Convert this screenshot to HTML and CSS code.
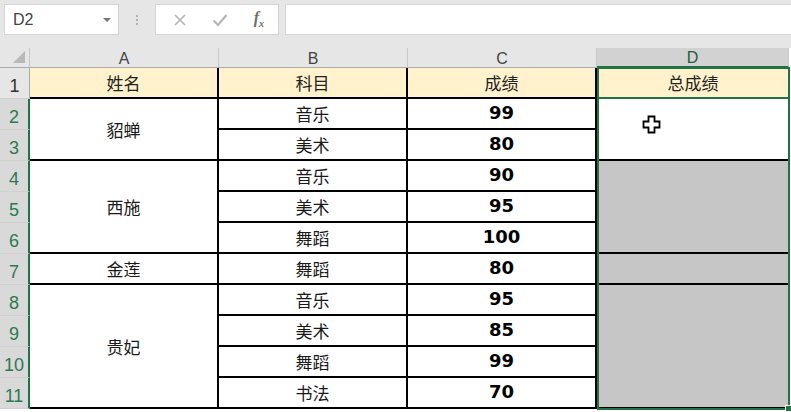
FILE: index.html
```html
<!DOCTYPE html>
<html lang="zh">
<head>
  <meta charset="UTF-8">
  <title>成绩表</title>
  <link rel="stylesheet" href="styles.css">
</head>
<body>
  <div class="top">
    <div class="name-box">
      <span>D2</span>
      <span class="caret"></span>
    </div>
    <div class="sep">
      <i></i><i></i><i></i>
    </div>
    <div class="fx-buttons">
      <svg class="fx-icon" width="14" height="14" viewBox="0 0 14 14"><path d="M2 2 L12 12 M12 2 L2 12" stroke="#b4b4b4" stroke-width="1.6" fill="none"/></svg>
      <svg class="fx-icon" width="16" height="14" viewBox="0 0 16 14"><path d="M1.5 7.5 L6 12 L14.5 2" stroke="#b4b4b4" stroke-width="2" fill="none"/></svg>
      <span class="fx">f<sub>x</sub></span>
    </div>
    <div class="formula-input"></div>
  </div>

  <div class="sheet">
    <div class="corner"><svg width="12" height="12" viewBox="0 0 12 12"><path d="M12 0 L12 12 L0 12 Z" fill="#b8b8b8"/></svg></div>
    <div class="ch">A</div>
    <div class="ch">B</div>
    <div class="ch">C</div>
    <div class="ch ch-sel">D</div>

    <div class="rh">1</div>
    <div class="cell head">姓名</div>
    <div class="cell head">科目</div>
    <div class="cell head">成绩</div>
    <div class="cell head head-d">总成绩</div>

    <div class="rh rh-sel">2</div>
    <div class="cell span2">貂蝉</div>
    <div class="cell">音乐</div>
    <div class="cell num">99</div>
    <div class="cell span2 col-d active"></div>

    <div class="rh rh-sel">3</div>
    <div class="cell">美术</div>
    <div class="cell num">80</div>

    <div class="rh rh-sel">4</div>
    <div class="cell span3">西施</div>
    <div class="cell">音乐</div>
    <div class="cell num">90</div>
    <div class="cell span3 col-d"></div>

    <div class="rh rh-sel">5</div>
    <div class="cell">美术</div>
    <div class="cell num">95</div>

    <div class="rh rh-sel">6</div>
    <div class="cell">舞蹈</div>
    <div class="cell num">100</div>

    <div class="rh rh-sel">7</div>
    <div class="cell">金莲</div>
    <div class="cell">舞蹈</div>
    <div class="cell num">80</div>
    <div class="cell col-d"></div>

    <div class="rh rh-sel">8</div>
    <div class="cell span4">贵妃</div>
    <div class="cell">音乐</div>
    <div class="cell num">95</div>
    <div class="cell span4 col-d"></div>

    <div class="rh rh-sel">9</div>
    <div class="cell">美术</div>
    <div class="cell num">85</div>

    <div class="rh rh-sel">10</div>
    <div class="cell">舞蹈</div>
    <div class="cell num">99</div>

    <div class="rh rh-sel">11</div>
    <div class="cell">书法</div>
    <div class="cell num">70</div>

    <!-- selection frame over column D -->
    <div class="selection"><span class="handle"></span></div>
    <svg class="cursor" width="19" height="19" viewBox="0 0 19 19">
      <path d="M6.5 1.5 H12.5 V6.5 H17.5 V12.5 H12.5 V17.5 H6.5 V12.5 H1.5 V6.5 H6.5 Z" fill="#fff" stroke="#000" stroke-width="1.8"/>
    </svg>
  </div>
</body>
</html>
```

FILE: styles.css
```css
body {
  margin: 0;
  width: 791px;
  height: 412px;
  overflow: hidden;
  background: #fff;
  font-family: "Liberation Sans", "Noto Sans CJK SC", sans-serif;
  color: #000;
}
.top {
  display: flex;
  align-items: flex-start;
  height: 48px;
  padding: 4px 0 0 4px;
  box-sizing: border-box;
  background: #e6e6e6;
}
.name-box {
  width: 115px;
  height: 31px;
  box-sizing: border-box;
  background: #fff;
  border: 1px solid #d6d6d6;
  display: flex;
  align-items: center;
  justify-content: space-between;
  padding: 0 7px 0 8px;
  font-size: 16px;
  color: #444;
}
.caret {
  width: 0;
  height: 0;
  border-left: 4px solid transparent;
  border-right: 4px solid transparent;
  border-top: 4px solid #777;
}
.sep {
  width: 36px;
  height: 31px;
  display: flex;
  flex-direction: column;
  align-items: center;
  justify-content: center;
  gap: 2px;
}
.sep i {
  width: 2px;
  height: 2px;
  background: #b0b0b0;
}
.fx-buttons {
  width: 124px;
  height: 31px;
  box-sizing: border-box;
  background: #fff;
  border: 1px solid #d6d6d6;
  display: flex;
  align-items: center;
  justify-content: space-between;
  padding: 0 14px 0 17px;
}
.fx {
  font-family: "Liberation Serif", serif;
  font-style: italic;
  font-weight: bold;
  font-size: 16px;
  color: #6e6e6e;
}
.fx sub {
  font-size: 10px;
}
.formula-input {
  flex: 1;
  height: 31px;
  margin-left: 6px;
  box-sizing: border-box;
  background: #fff;
  border: 1px solid #d6d6d6;
  border-right: none;
}
.sheet {
  position: relative;
  display: grid;
  grid-template-columns: 30px 189px 189px 189px 192px;
  grid-template-rows: 20px repeat(11, 31px);
}
.corner {
  background: #e6e6e6;
  border-right: 1px solid #c8c8c8;
  border-bottom: 1px solid #ababab;
  box-sizing: border-box;
  display: flex;
  align-items: flex-end;
  justify-content: flex-end;
  padding: 0 4px 4px 0;
}
.ch {
  background: #e6e6e6;
  border-right: 1px solid #c8c8c8;
  border-bottom: 1px solid #ababab;
  box-sizing: border-box;
  display: flex;
  align-items: center;
  justify-content: center;
  font-size: 16px;
  color: #444;
  padding-top: 2px;
}
.ch-sel {
  background: #d2d2d2;
  color: #215e3f;
  border-bottom: 2px solid #217346;
}
.rh {
  grid-column: 1;
  background: #e6e6e6;
  border-right: 1px solid #ababab;
  border-bottom: 1px solid #d0d0d0;
  box-sizing: border-box;
  display: flex;
  align-items: flex-end;
  justify-content: center;
  padding-bottom: 1px;
  font-size: 18px;
  color: #333;
}
.rh-sel {
  background: #d9d9d9;
  color: #2a7a52;
  border-right: 2px solid #217346;
}
.cell {
  box-sizing: border-box;
  border-right: 2px solid #000;
  border-bottom: 2px solid #000;
  background: #fff;
  display: flex;
  align-items: center;
  justify-content: center;
  font-family: "Noto Sans CJK SC", sans-serif;
  font-size: 17px;
  color: #1a1a1a;
}
.head {
  background: #fff2cc;
  color: #222;
}
.head-d {
  border-right: none;
  border-bottom: 2px solid #217346;
}
.num {
  font-family: "DejaVu Sans", sans-serif;
  font-weight: bold;
  font-size: 18px;
  color: #000;
  padding-bottom: 2px;
}
.span2 {
  grid-row: span 2;
}
.span3 {
  grid-row: span 3;
}
.span4 {
  grid-row: span 4;
}
.col-d {
  background: #c6c6c6;
  border-right: none;
}
.active {
  background: #fff;
}
.selection {
  position: absolute;
  left: 597px;
  top: 19px;
  width: 193px;
  height: 343px;
  box-sizing: border-box;
  border: 2px solid #217346;
  pointer-events: none;
}
.handle {
  position: absolute;
  right: -4px;
  bottom: -4px;
  width: 5px;
  height: 5px;
  background: #217346;
  border: 1px solid #fff;
}
.cursor {
  position: absolute;
  left: 642px;
  top: 67px;
}
```
